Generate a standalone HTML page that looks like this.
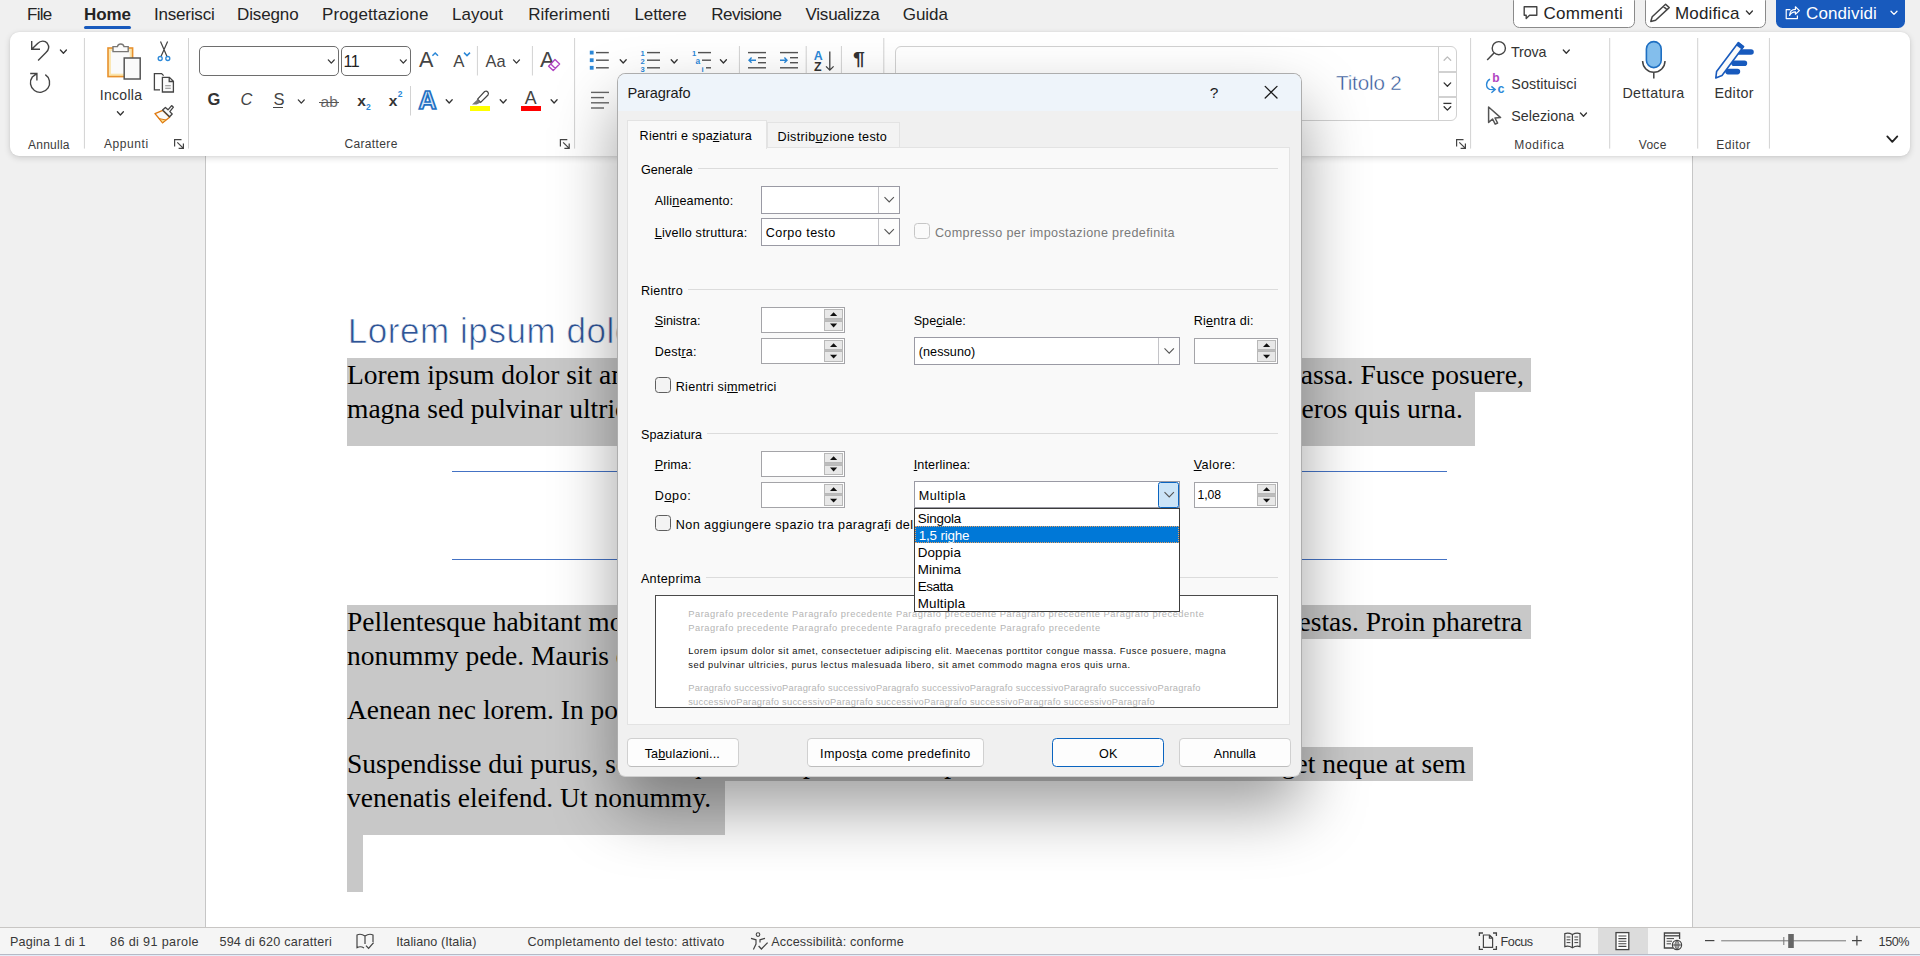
<!DOCTYPE html>
<html lang="it"><head><meta charset="utf-8"><title>Paragrafo</title>
<style>
html,body{margin:0;padding:0}
body{width:1920px;height:956px;overflow:hidden;position:relative;background:#f0f0f0;font-family:"Liberation Sans",sans-serif}
.t{position:absolute;white-space:pre;display:block}
u{text-decoration:underline;text-decoration-thickness:1px;text-underline-offset:0.5px}
#page{position:absolute;left:205px;top:150px;width:1488px;height:790px;background:#fff;border-left:1px solid #c6c6c6;border-right:1px solid #c6c6c6;box-sizing:border-box}
#ribbon{position:absolute;left:10px;top:32px;width:1900px;height:124px;background:#fff;border-radius:9px;box-shadow:0 2px 6px rgba(0,0,0,.15),0 0 2px rgba(0,0,0,.08)}
#ricons{position:absolute;left:0;top:0}
.cb{position:absolute;box-sizing:border-box;border:1px solid #6e6e6e;border-radius:5px;background:#fff}
#status{position:absolute;left:0;top:927px;width:1920px;height:29px;background:linear-gradient(#f5f5f5,#f5f5f5 26px,#b6bac6 26px,#b6bac6 27px,#e2ecf8 27px);border-top:1px solid #c8c6c4;box-sizing:border-box}
#dlg{position:absolute;left:617px;top:73px;width:685px;height:704px;background:#f0f0f0;border-radius:8.5px;border:1px solid #adadad;border-bottom-color:#cfcfcf;box-sizing:border-box;overflow:hidden;box-shadow:0 32px 64px rgba(0,0,0,.38)}
#dlgtitle{position:absolute;left:0;top:0;width:100%;height:37px;background:#eef4fa}
</style></head><body>
<!-- document -->
<div id="page"></div>
<div style="position:absolute;left:347px;top:358px;width:1184.0px;height:34.0px;background:#c8c8c8"></div>
<div style="position:absolute;left:347px;top:392px;width:1128.0px;height:54.0px;background:#c8c8c8"></div>
<div style="position:absolute;left:347px;top:605px;width:1184.0px;height:34.0px;background:#c8c8c8"></div>
<div style="position:absolute;left:347px;top:639px;width:413.0px;height:54.0px;background:#c8c8c8"></div>
<div style="position:absolute;left:347px;top:693px;width:763.0px;height:54.0px;background:#c8c8c8"></div>
<div style="position:absolute;left:347px;top:747px;width:1126.0px;height:34.0px;background:#c8c8c8"></div>
<div style="position:absolute;left:347px;top:781px;width:378.3px;height:53.7px;background:#c8c8c8"></div>
<div style="position:absolute;left:347px;top:834.7px;width:15.8px;height:56.9px;background:#c8c8c8"></div>
<div style="position:absolute;left:452px;top:470.6px;width:995px;height:1.3px;background:#4472c4"></div>
<div style="position:absolute;left:452px;top:558.6px;width:995px;height:1.3px;background:#4472c4"></div>
<span class="t" style="left:347.80px;top:313px;font:35px/1 'Liberation Sans',sans-serif;color:#2f5496;letter-spacing:0.552px;-webkit-text-stroke:0.7px #fff;">Lorem ipsum dolor sit amet</span>
<span class="t" style="left:347.00px;top:361px;font:27.5px/1 'Liberation Serif',serif;color:#000;">Lorem ipsum dolor sit amet, consectetuer adipiscing elit. Maecenas porttitor congue massa. Fusce posuere,</span>
<span class="t" style="left:347.00px;top:395px;font:27.5px/1 'Liberation Serif',serif;color:#000;">magna sed pulvinar ultricies, purus lectus malesuada libero, sit amet commodo magna eros quis urna.</span>
<span class="t" style="left:347.00px;top:608px;font:27.5px/1 'Liberation Serif',serif;color:#000;">Pellentesque habitant morbi tristique senectus et netus et malesuada fames ac turpis egestas. Proin pharetra</span>
<span class="t" style="left:347.00px;top:642px;font:27.5px/1 'Liberation Serif',serif;color:#000;">nonummy pede. Mauris et orci.</span>
<span class="t" style="left:347.00px;top:696px;font:27.5px/1 'Liberation Serif',serif;color:#000;">Aenean nec lorem. In porttitor. Donec laoreet nonummy augue.</span>
<span class="t" style="left:347.00px;top:750px;font:27.5px/1 'Liberation Serif',serif;color:#000;">Suspendisse dui purus, scelerisque at, vulputate vitae, pretium mattis, nunc. Mauris eget neque at sem</span>
<span class="t" style="left:347.00px;top:784px;font:27.5px/1 'Liberation Serif',serif;color:#000;">venenatis eleifend. Ut nonummy.</span>
<!-- ribbon -->
<span class="t" style="left:27.00px;top:6px;font:17px/1 'Liberation Sans',sans-serif;color:#242424;letter-spacing:-0.723px;">File</span>
<span class="t" style="left:84.00px;top:6px;font:bold 17px/1 'Liberation Sans',sans-serif;color:#242424;letter-spacing:-0.058px;">Home</span>
<span class="t" style="left:154.00px;top:6px;font:17px/1 'Liberation Sans',sans-serif;color:#242424;letter-spacing:-0.205px;">Inserisci</span>
<span class="t" style="left:237.00px;top:6px;font:17px/1 'Liberation Sans',sans-serif;color:#242424;letter-spacing:-0.125px;">Disegno</span>
<span class="t" style="left:322.00px;top:6px;font:17px/1 'Liberation Sans',sans-serif;color:#242424;letter-spacing:0.123px;">Progettazione</span>
<span class="t" style="left:452.00px;top:6px;font:17px/1 'Liberation Sans',sans-serif;color:#242424;letter-spacing:-0.007px;">Layout</span>
<span class="t" style="left:528.20px;top:6px;font:17px/1 'Liberation Sans',sans-serif;color:#242424;letter-spacing:0.051px;">Riferimenti</span>
<span class="t" style="left:634.50px;top:6px;font:17px/1 'Liberation Sans',sans-serif;color:#242424;letter-spacing:-0.132px;">Lettere</span>
<span class="t" style="left:711.20px;top:6px;font:17px/1 'Liberation Sans',sans-serif;color:#242424;letter-spacing:-0.483px;">Revisione</span>
<span class="t" style="left:805.50px;top:6px;font:17px/1 'Liberation Sans',sans-serif;color:#242424;letter-spacing:-0.223px;">Visualizza</span>
<span class="t" style="left:902.70px;top:6px;font:17px/1 'Liberation Sans',sans-serif;color:#242424;letter-spacing:-0.013px;">Guida</span>
<div style="position:absolute;left:84px;top:25.5px;width:47px;height:3px;border-radius:1.5px;background:#185abd"></div>
<div style="position:absolute;left:1513px;top:-6px;width:122px;height:33.5px;border:1px solid #8a8a8a;border-radius:6.5px;background:#fff;box-sizing:border-box"></div>
<div style="position:absolute;left:1645px;top:-6px;width:121px;height:33.5px;border:1px solid #8a8a8a;border-radius:6.5px;background:#fff;box-sizing:border-box"></div>
<div style="position:absolute;left:1776px;top:-6px;width:129px;height:34px;border-radius:6.5px;background:#185abd"></div>
<span class="t" style="left:1543.50px;top:5px;font:17px/1 'Liberation Sans',sans-serif;color:#242424;letter-spacing:0.255px;">Commenti</span>
<span class="t" style="left:1675.00px;top:5px;font:17px/1 'Liberation Sans',sans-serif;color:#242424;letter-spacing:0.150px;">Modifica</span>
<span class="t" style="left:1806.00px;top:5px;font:17px/1 'Liberation Sans',sans-serif;color:#ffffff;letter-spacing:0.119px;">Condividi</span>
<div id="ribbon"></div>
<span class="t" style="left:28.00px;top:139px;font:12px/1 'Liberation Sans',sans-serif;color:#3b3b3b;letter-spacing:0.238px;">Annulla</span>
<span class="t" style="left:104.00px;top:138px;font:12px/1 'Liberation Sans',sans-serif;color:#3b3b3b;letter-spacing:0.571px;">Appunti</span>
<span class="t" style="left:344.40px;top:138px;font:12px/1 'Liberation Sans',sans-serif;color:#3b3b3b;letter-spacing:0.364px;">Carattere</span>
<span class="t" style="left:1514.20px;top:139px;font:12px/1 'Liberation Sans',sans-serif;color:#3b3b3b;letter-spacing:0.727px;">Modifica</span>
<span class="t" style="left:1638.80px;top:139px;font:12px/1 'Liberation Sans',sans-serif;color:#3b3b3b;letter-spacing:0.278px;">Voce</span>
<span class="t" style="left:1716.20px;top:139px;font:12px/1 'Liberation Sans',sans-serif;color:#3b3b3b;letter-spacing:0.542px;">Editor</span>
<span class="t" style="left:99.70px;top:88px;font:14px/1 'Liberation Sans',sans-serif;color:#333;letter-spacing:0.319px;">Incolla</span>
<span class="t" style="left:1511.00px;top:45px;font:14.3px/1 'Liberation Sans',sans-serif;color:#333;letter-spacing:-0.145px;">Trova</span>
<span class="t" style="left:1511.30px;top:77px;font:14.3px/1 'Liberation Sans',sans-serif;color:#333;letter-spacing:0.094px;">Sostituisci</span>
<span class="t" style="left:1511.30px;top:109px;font:14.3px/1 'Liberation Sans',sans-serif;color:#333;letter-spacing:0.010px;">Seleziona</span>
<span class="t" style="left:1622.40px;top:86px;font:14.3px/1 'Liberation Sans',sans-serif;color:#333;letter-spacing:0.387px;">Dettatura</span>
<span class="t" style="left:1714.40px;top:86px;font:14.3px/1 'Liberation Sans',sans-serif;color:#333;letter-spacing:0.357px;">Editor</span>
<div class="cb" style="left:199px;top:46px;width:140px;height:30px"></div>
<div class="cb" style="left:341px;top:46px;width:70px;height:30px"></div>
<span class="t" style="left:343.60px;top:54px;font:16px/1 'Liberation Sans',sans-serif;color:#222;letter-spacing:-0.6px;">11</span>
<div style="position:absolute;left:895px;top:46px;width:562px;height:75px;border:1px solid #d1d1d1;border-radius:6px;background:#fff;box-sizing:border-box"></div>
<div style="position:absolute;left:1438px;top:47px;width:1px;height:73px;background:#d1d1d1"></div>
<div style="position:absolute;left:1438px;top:71px;width:18px;height:2px;background:#d1d1d1"></div>
<div style="position:absolute;left:1438px;top:95.5px;width:18px;height:2px;background:#d1d1d1"></div>
<span class="t" style="left:1336.00px;top:73px;font:20.6px/1 'Liberation Sans',sans-serif;color:#2f5496;letter-spacing:-0.149px;-webkit-text-stroke:0.45px #fff;">Titolo 2</span>
<span class="t" style="left:207.60px;top:91px;font:bold 16.5px/1 'Liberation Sans',sans-serif;color:#333;letter-spacing:-0.434px;">G</span>
<span class="t" style="left:240.40px;top:91px;font:italic 16.5px/1 'Liberation Sans',sans-serif;color:#444;letter-spacing:-0.316px;">C</span>
<span class="t" style="left:273.60px;top:91px;font:16.5px/1 'Liberation Sans',sans-serif;color:#444;letter-spacing:-2.005px;">S</span>
<div style="position:absolute;left:273.2px;top:107.2px;width:9.8px;height:1.2px;background:#444"></div>
<span class="t" style="left:320.60px;top:94px;font:15.5px/1 'Liberation Sans',sans-serif;color:#6a6a6a;letter-spacing:-0.020px;">ab</span>
<div style="position:absolute;left:319px;top:102.2px;width:20px;height:1.1px;background:#555"></div>
<span class="t" style="left:357.30px;top:93px;font:bold 15.5px/1 'Liberation Sans',sans-serif;color:#333;letter-spacing:-0.320px;">x</span>
<span class="t" style="left:365.90px;top:103px;font:bold 8.5px/1 'Liberation Sans',sans-serif;color:#2b88d8;">2</span>
<span class="t" style="left:388.80px;top:93px;font:bold 15.5px/1 'Liberation Sans',sans-serif;color:#333;letter-spacing:-0.220px;">x</span>
<span class="t" style="left:397.80px;top:90px;font:bold 8.5px/1 'Liberation Sans',sans-serif;color:#2b88d8;">2</span>
<span class="t" style="left:419.00px;top:49px;font:21.6px/1 'Liberation Sans',sans-serif;color:#444;letter-spacing:-0.207px;">A</span>
<span class="t" style="left:453.20px;top:54px;font:16.8px/1 'Liberation Sans',sans-serif;color:#444;letter-spacing:0.494px;">A</span>
<span class="t" style="left:485.60px;top:53px;font:16.4px/1 'Liberation Sans',sans-serif;color:#444;letter-spacing:-0.030px;">Aa</span>
<span class="t" style="left:540.00px;top:49px;font:22.2px/1 'Liberation Sans',sans-serif;color:#444;letter-spacing:-2.107px;">A</span>
<span class="t" style="left:418.60px;top:88px;font:bold 25px/1 'Liberation Sans',sans-serif;color:#d6e8f8;letter-spacing:1.746px;-webkit-text-stroke:1.7px #1e6fc2;">A</span>
<span class="t" style="left:524.80px;top:90px;font:17.8px/1 'Liberation Sans',sans-serif;color:#444;letter-spacing:0.727px;">A</span>
<div style="position:absolute;left:470px;top:106px;width:20px;height:5px;background:#ffff00"></div>
<div style="position:absolute;left:521px;top:106px;width:20px;height:5px;background:#ff0000"></div>
<span class="t" style="left:813.80px;top:50px;font:bold 12.4px/1 'Liberation Sans',sans-serif;color:#2b88d8;letter-spacing:0.245px;">A</span>
<span class="t" style="left:814.00px;top:61px;font:bold 12.4px/1 'Liberation Sans',sans-serif;color:#333;letter-spacing:1.026px;">Z</span>
<span class="t" style="left:852.60px;top:51px;font:bold 17.5px/1 'Liberation Sans',sans-serif;color:#333;transform:scaleX(1.22);transform-origin:0 0;">¶</span>
<span class="t" style="left:640.60px;top:50px;font:bold 7.6px/1 'Liberation Sans',sans-serif;color:#2b88d8;">1</span>
<span class="t" style="left:640.60px;top:58px;font:bold 7.6px/1 'Liberation Sans',sans-serif;color:#2b88d8;">2</span>
<span class="t" style="left:640.60px;top:66px;font:bold 7.6px/1 'Liberation Sans',sans-serif;color:#2b88d8;">3</span>
<span class="t" style="left:692.00px;top:50px;font:bold 7.6px/1 'Liberation Sans',sans-serif;color:#2b88d8;">1</span>
<span class="t" style="left:695.40px;top:57px;font:bold 8.4px/1 'Liberation Sans',sans-serif;color:#2b88d8;">a</span>
<span class="t" style="left:701.40px;top:66px;font:bold 7.6px/1 'Liberation Sans',sans-serif;color:#2b88d8;">i</span>
<span class="t" style="left:1492.20px;top:72px;font:bold 12px/1 'Liberation Sans',sans-serif;color:#b146c2;">b</span>
<span class="t" style="left:1497.60px;top:83px;font:bold 12.5px/1 'Liberation Sans',sans-serif;color:#2b88d8;">c</span>
<svg id="ricons" width="1920" height="170" viewBox="0 0 1920 170">
<rect x="83.9" y="38" width="1" height="110.6" fill="#d2d2d2"/>
<rect x="188.0" y="38" width="1" height="110.6" fill="#d2d2d2"/>
<rect x="574.1" y="38" width="1" height="110.6" fill="#d2d2d2"/>
<rect x="883.3" y="38" width="1" height="110.6" fill="#d2d2d2"/>
<rect x="1470.1" y="38" width="1" height="110.6" fill="#d2d2d2"/>
<rect x="1609.2" y="38" width="1" height="110.6" fill="#d2d2d2"/>
<rect x="1697.2" y="38" width="1" height="110.6" fill="#d2d2d2"/>
<rect x="1768.9" y="38" width="1" height="110.6" fill="#d2d2d2"/>
<rect x="410.0" y="86" width="1" height="29.5" fill="#d2d2d2"/>
<rect x="476.9" y="46" width="1" height="29.5" fill="#d2d2d2"/>
<rect x="531.9" y="46" width="1" height="29.5" fill="#d2d2d2"/>
<rect x="738.9" y="46" width="1" height="29.5" fill="#d2d2d2"/>
<rect x="805.7" y="46" width="1" height="29.5" fill="#d2d2d2"/>
<rect x="840.9" y="46" width="1" height="29.5" fill="#d2d2d2"/>
<path d="M174.6,146.5 V139.6 H181.5" fill="none" stroke="#444" stroke-width="1.2"/><path d="M177.3,142.3 L183.2,148.2 M183.4,143.6 V148.4 H178.6" fill="none" stroke="#444" stroke-width="1.2"/>
<path d="M560.4,146.5 V139.6 H567.3" fill="none" stroke="#444" stroke-width="1.2"/><path d="M563.0999999999999,142.3 L569.0,148.2 M569.1999999999999,143.6 V148.4 H564.4" fill="none" stroke="#444" stroke-width="1.2"/>
<path d="M1456.6,146.5 V139.6 H1463.5" fill="none" stroke="#444" stroke-width="1.2"/><path d="M1459.3,142.3 L1465.2,148.2 M1465.4,143.6 V148.4 H1460.6" fill="none" stroke="#444" stroke-width="1.2"/>
<path d="M60.40,50.00 L63.40,53.20 L66.40,50.00" fill="none" stroke="#333" stroke-width="1.3" stroke-linecap="round" stroke-linejoin="round"/>
<path d="M117.40,111.80 L120.40,115.00 L123.40,111.80" fill="none" stroke="#333" stroke-width="1.3" stroke-linecap="round" stroke-linejoin="round"/>
<path d="M328.30,59.90 L331.30,63.10 L334.30,59.90" fill="none" stroke="#333" stroke-width="1.3" stroke-linecap="round" stroke-linejoin="round"/>
<path d="M400.30,59.90 L403.30,63.10 L406.30,59.90" fill="none" stroke="#333" stroke-width="1.3" stroke-linecap="round" stroke-linejoin="round"/>
<path d="M298.30,99.90 L301.30,103.10 L304.30,99.90" fill="none" stroke="#333" stroke-width="1.3" stroke-linecap="round" stroke-linejoin="round"/>
<path d="M513.50,59.90 L516.50,63.10 L519.50,59.90" fill="none" stroke="#333" stroke-width="1.3" stroke-linecap="round" stroke-linejoin="round"/>
<path d="M446.20,99.80 L449.20,103.00 L452.20,99.80" fill="none" stroke="#333" stroke-width="1.3" stroke-linecap="round" stroke-linejoin="round"/>
<path d="M500.20,99.80 L503.20,103.00 L506.20,99.80" fill="none" stroke="#333" stroke-width="1.3" stroke-linecap="round" stroke-linejoin="round"/>
<path d="M551.10,99.80 L554.10,103.00 L557.10,99.80" fill="none" stroke="#333" stroke-width="1.3" stroke-linecap="round" stroke-linejoin="round"/>
<path d="M620.20,59.80 L623.20,63.00 L626.20,59.80" fill="none" stroke="#333" stroke-width="1.3" stroke-linecap="round" stroke-linejoin="round"/>
<path d="M671.20,59.80 L674.20,63.00 L677.20,59.80" fill="none" stroke="#333" stroke-width="1.3" stroke-linecap="round" stroke-linejoin="round"/>
<path d="M720.40,59.80 L723.40,63.00 L726.40,59.80" fill="none" stroke="#333" stroke-width="1.3" stroke-linecap="round" stroke-linejoin="round"/>
<path d="M1563.30,50.00 L1566.30,53.20 L1569.30,50.00" fill="none" stroke="#333" stroke-width="1.3" stroke-linecap="round" stroke-linejoin="round"/>
<path d="M1580.50,113.00 L1583.50,116.20 L1586.50,113.00" fill="none" stroke="#333" stroke-width="1.3" stroke-linecap="round" stroke-linejoin="round"/>
<path d="M1746.40,11.00 L1749.40,14.20 L1752.40,11.00" fill="none" stroke="#333" stroke-width="1.3" stroke-linecap="round" stroke-linejoin="round"/>
<path d="M1891.00,11.20 L1894.00,14.40 L1897.00,11.20" fill="none" stroke="#fff" stroke-width="1.3" stroke-linecap="round" stroke-linejoin="round"/>
<path d="M1887.30,136.40 L1892.30,141.80 L1897.30,136.40" fill="none" stroke="#222" stroke-width="1.8" stroke-linecap="round" stroke-linejoin="round"/>
<path d="M1444.10,60.30 L1447.40,56.90 L1450.70,60.30" fill="none" stroke="#bdbdbd" stroke-width="1.3" stroke-linecap="round" stroke-linejoin="round"/>
<path d="M1444.10,82.90 L1447.40,86.30 L1450.70,82.90" fill="none" stroke="#333" stroke-width="1.3" stroke-linecap="round" stroke-linejoin="round"/>
<path d="M1444.10,106.70 L1447.40,110.10 L1450.70,106.70" fill="none" stroke="#333" stroke-width="1.3" stroke-linecap="round" stroke-linejoin="round"/>
<path d="M1443.4,103.4 H1451.4" stroke="#333" stroke-width="1.3"/>
<path d="M31.7,41 V49.2 H40 M32.2,48.8 L37.6,43.4 C40.6,40.4 45,40.3 47.3,43.3 C49.4,46.2 48.7,49.8 46,52.5 L38.1,60.4" fill="none" stroke="#444" stroke-width="1.4"/>
<path d="M45.3,74.7 A9.6,9.6 0 1 1 32.3,77 L36.8,73.6 M30.2,73.5 H36.9 V80.4" fill="none" stroke="#444" stroke-width="1.4"/>
<rect x="108" y="48" width="24.6" height="28.6" fill="#fbe5ac" stroke="#e8912d" stroke-width="1.6"/>
<rect x="110.9" y="50.9" width="18.8" height="22.8" fill="#fafafa"/>
<path d="M113,51.6 V46.6 H117.4 A3.4,3.4 0 0 1 124,46.6 H128.2 V51.6 Z" fill="#fafafa" stroke="#797775" stroke-width="1.4"/>
<rect x="124.2" y="58" width="16" height="21" fill="#fafafa" stroke="#555" stroke-width="1.5"/>
<path d="M160.5,41.5 L167,56.6 M167.6,41.5 L161,56.6" fill="none" stroke="#444" stroke-width="1.2"/>
<circle cx="160.2" cy="58.5" r="2" fill="#fff" stroke="#2b88d8" stroke-width="1.3"/><circle cx="167.8" cy="58.5" r="2" fill="#fff" stroke="#2b88d8" stroke-width="1.3"/>
<path d="M160,89.8 H154.4 V73.6 H161.6 L163.6,75.6" fill="none" stroke="#444" stroke-width="1.3"/>
<path d="M162.4,77.3 H169.4 L173.4,81.3 V92 H162.4 Z M169.2,77.5 V81.5 H173.2" fill="#fafafa" stroke="#444" stroke-width="1.3"/>
<path d="M165.2,85.8 H170.8 M165.2,88.2 H170.8" stroke="#888" stroke-width="1.1"/>
<path d="M155,113.6 L162.8,110.4 L169.6,117.2 L162.6,122.8 Z" fill="#fafafa" stroke="#e07a10" stroke-width="1.4" stroke-linejoin="round"/>
<path d="M159.2,118.6 L166,120 L162.6,122.6 Z" fill="#fbe08c" stroke="#e07a10" stroke-width="1"/>
<path d="M162.6,110 L165.4,107.4 L168,109.8 L171.6,105.6 L173.4,107.2 L169.8,111.6 L172.2,114 L169.6,116.8 Z" fill="#fafafa" stroke="#444" stroke-width="1.3" stroke-linejoin="round"/>
<path d="M432.4,55.8 L435.2,53 L438,55.8" fill="none" stroke="#2b88d8" stroke-width="1.5"/>
<path d="M464,52.6 L467,55.6 L470,52.6" fill="none" stroke="#2b88d8" stroke-width="1.5"/>
<path d="M548.6,66.2 L555,59.6 L559.6,64 L553.2,70.6 Z M550.8,64 L555.4,68.4" fill="#fff" stroke="#b146c2" stroke-width="1.4" stroke-linejoin="round"/>
<path d="M477.6,99.2 L484.6,91.6 Q486.4,90.6 487.8,92 Q489,93.4 488,95 L480.6,102.4 Z" fill="#fff" stroke="#444" stroke-width="1.2"/>
<path d="M477.4,99.4 L480.6,102.6 L476.6,104.6 L472,104.6 Z" fill="#777"/>
<rect x="589.8" y="50.7" width="3.8" height="3.8" fill="#2b88d8"/><rect x="596" y="51.9" width="12.8" height="1.4" fill="#555"/>
<rect x="647" y="51.9" width="13" height="1.4" fill="#555"/>
<rect x="589.8" y="58.300000000000004" width="3.8" height="3.8" fill="#2b88d8"/><rect x="596" y="59.5" width="12.8" height="1.4" fill="#555"/>
<rect x="647" y="59.5" width="13" height="1.4" fill="#555"/>
<rect x="589.8" y="65.89999999999999" width="3.8" height="3.8" fill="#2b88d8"/><rect x="596" y="67.1" width="12.8" height="1.4" fill="#555"/>
<rect x="647" y="67.1" width="13" height="1.4" fill="#555"/>
<rect x="698" y="51.9" width="13" height="1.4" fill="#555"/><rect x="702" y="59.5" width="9" height="1.4" fill="#555"/><rect x="706" y="67.1" width="5" height="1.4" fill="#555"/>
<rect x="748" y="51.9" width="18" height="1.4" fill="#555"/><rect x="748" y="67.1" width="18" height="1.4" fill="#555"/>
<rect x="758" y="57" width="8" height="1.4" fill="#555"/><rect x="758" y="62" width="8" height="1.4" fill="#555"/>
<path d="M756,60.2 H749 M751.6,57.6 L749,60.2 L751.6,62.8" fill="none" stroke="#2b88d8" stroke-width="1.4"/>
<rect x="780" y="51.9" width="18" height="1.4" fill="#555"/><rect x="780" y="67.1" width="18" height="1.4" fill="#555"/>
<rect x="790" y="57" width="8" height="1.4" fill="#555"/><rect x="790" y="62" width="8" height="1.4" fill="#555"/>
<path d="M780,60.2 H787 M784.4,57.6 L787,60.2 L784.4,62.8" fill="none" stroke="#2b88d8" stroke-width="1.4"/>
<path d="M829.8,51.6 V70 M826,66.4 L829.8,70.2 L833.6,66.4" fill="none" stroke="#444" stroke-width="1.3"/>
<rect x="591" y="91.7" width="18" height="1.4" fill="#666"/>
<rect x="591" y="96.89999999999999" width="13" height="1.4" fill="#666"/>
<rect x="591" y="102.1" width="18" height="1.4" fill="#666"/>
<rect x="591" y="107.3" width="13" height="1.4" fill="#666"/>
<circle cx="1498.8" cy="48.2" r="6.6" fill="none" stroke="#444" stroke-width="1.4"/><path d="M1494,53 L1487.2,60" stroke="#444" stroke-width="1.5"/>
<path d="M1490,79.2 C1485.6,81.6 1485.4,87.6 1489.6,89.4 L1495,89.6 M1491.4,86.4 L1495.2,89.6 L1491.4,92.8" fill="none" stroke="#2b88d8" stroke-width="1.4"/>
<path d="M1488.6,107 V122.4 L1492.6,119 L1495.2,124.2 L1497.6,123 L1495,118 L1500.6,117.6 Z" fill="#fff" stroke="#555" stroke-width="1.5" stroke-linejoin="round"/>
<rect x="1646.4" y="41.6" width="14.8" height="26" rx="7.4" fill="#83beec" stroke="#1e6fc2" stroke-width="1.6"/>
<path d="M1642.6,61 A11.2,11.2 0 0 0 1665,61 M1653.8,72.4 V78.6" fill="none" stroke="#444" stroke-width="1.5"/>
<path d="M1739,52 H1751 M1734,63.2 H1744.4 M1728,71.6 H1737.4" stroke="#185abd" stroke-width="5.6" stroke-linecap="round"/>
<path d="M1738.4,42.6 L1743.6,46.6 L1722,75.6 L1715.8,78 L1716.6,71.4 Z" fill="#fafafa" stroke="#185abd" stroke-width="1.6" stroke-linejoin="round"/>
<path d="M1738.4,42 L1744.2,46.4 L1741.8,49.6 L1736,45.2 Z" fill="#185abd"/>
<path d="M1524.2,6.8 H1536.8 V15.2 H1529.6 L1526.2,18.4 V15.2 H1524.2 Z" fill="none" stroke="#444" stroke-width="1.4" stroke-linejoin="round"/>
<path d="M1665.6,4.2 L1669.2,7.6 L1655.6,20.2 L1650.8,21.4 L1652.2,16.8 Z M1663.4,6.4 L1667,9.8" fill="none" stroke="#444" stroke-width="1.5" stroke-linejoin="round"/>
<path d="M1790.4,9.6 H1786.2 V18.6 H1797.4 V15.6 M1789.6,15.4 C1789.8,11.4 1792.4,9.4 1795.4,9.4 V6.8 L1799.4,10.6 L1795.4,14.2 V11.8 C1793,11.8 1791,12.8 1789.6,15.4 Z" fill="none" stroke="#fff" stroke-width="1.2" stroke-linejoin="round"/>
</svg>
<!-- status -->
<div id="status"></div>
<span class="t" style="left:10.00px;top:936px;font:12.6px/1 'Liberation Sans',sans-serif;color:#383838;letter-spacing:0.165px;">Pagina 1 di 1</span>
<span class="t" style="left:110.00px;top:936px;font:12.6px/1 'Liberation Sans',sans-serif;color:#383838;letter-spacing:0.376px;">86 di 91 parole</span>
<span class="t" style="left:219.40px;top:936px;font:12.6px/1 'Liberation Sans',sans-serif;color:#383838;letter-spacing:0.237px;">594 di 620 caratteri</span>
<span class="t" style="left:396.20px;top:936px;font:12.6px/1 'Liberation Sans',sans-serif;color:#383838;letter-spacing:0.068px;">Italiano (Italia)</span>
<span class="t" style="left:527.40px;top:936px;font:12.6px/1 'Liberation Sans',sans-serif;color:#383838;letter-spacing:0.291px;">Completamento del testo: attivato</span>
<span class="t" style="left:771.20px;top:936px;font:12.6px/1 'Liberation Sans',sans-serif;color:#383838;letter-spacing:0.172px;">Accessibilità: conforme</span>
<span class="t" style="left:1500.60px;top:936px;font:12.6px/1 'Liberation Sans',sans-serif;color:#383838;letter-spacing:-0.442px;">Focus</span>
<span class="t" style="left:1878.60px;top:936px;font:12.6px/1 'Liberation Sans',sans-serif;color:#383838;letter-spacing:-0.457px;">150%</span>
<div style="position:absolute;left:1598px;top:928px;width:50px;height:26px;background:#dcdcdc"></div>
<svg id="sicons" width="1920" height="40" viewBox="0 916 1920 40" style="position:absolute;left:0;top:916px">
<path d="M365,936 C362,934 359,934 357,935 V947.6 C359,946.6 362,946.6 364,948 M365,936 C368,934 371,934 373,935 V942 M365,936 V944" fill="none" stroke="#444" stroke-width="1.2"/>
<path d="M366,945.6 L368.6,948.4 L373.6,942.6" fill="none" stroke="#444" stroke-width="1.3"/>
<circle cx="758" cy="934.6" r="1.8" fill="none" stroke="#444" stroke-width="1.1"/><path d="M751,938.4 L756,939.8 V944 L753.4,949.4 M765,938.4 L760,939.8 V942.4" fill="none" stroke="#444" stroke-width="1.2"/>
<path d="M758.6,946 L761.4,949 L767.6,942.6" fill="none" stroke="#444" stroke-width="1.3"/>
<path d="M1479.4,936 V933 H1483 M1493,933 H1496.4 V936 M1496.4,946 V949.4 H1493 M1483,949.4 H1479.4 V946" fill="none" stroke="#444" stroke-width="1.3"/>
<path d="M1483.4,935 H1489.6 L1492.6,938 V947.4 H1483.4 Z M1489.4,935.2 V938.2 H1492.4" fill="none" stroke="#444" stroke-width="1.2"/>
<path d="M1572.4,934.6 C1569.6,933 1566.8,933 1564.8,933.6 V946.6 C1566.8,946 1569.6,946 1572.4,947.8 C1575.2,946 1578,946 1580,946.6 V933.6 C1578,933 1575.2,933 1572.4,934.6 Z M1572.4,934.6 V947.6" fill="none" stroke="#444" stroke-width="1.2"/>
<path d="M1566.6,937 H1570.4 M1566.6,939.8 H1570.4 M1566.6,942.6 H1570.4 M1574.4,937 H1578.2 M1574.4,939.8 H1578.2 M1574.4,942.6 H1578.2" stroke="#444" stroke-width="1"/>
<rect x="1616" y="932.6" width="12.8" height="17" fill="#fff" stroke="#444" stroke-width="1.3"/>
<path d="M1618.4,936 H1626.4 M1618.4,938.6 H1626.4 M1618.4,941.2 H1626.4 M1618.4,943.8 H1626.4 M1618.4,946.4 H1626.4" stroke="#444" stroke-width="1.1"/>
<path d="M1673,948 H1664.4 V933 H1679.6 V939" fill="none" stroke="#444" stroke-width="1.3"/><path d="M1664.4,935.8 H1679.6" stroke="#444" stroke-width="1.3"/>
<path d="M1666.6,938.6 H1674 M1666.6,941.2 H1672 M1666.6,943.8 H1671" stroke="#444" stroke-width="1"/>
<circle cx="1677" cy="945" r="4.6" fill="#f5f5f5" stroke="#444" stroke-width="1.2"/><path d="M1672.4,945 H1681.6 M1677,940.4 V949.6 M1677,940.4 C1674.4,943 1674.4,947 1677,949.6 M1677,940.4 C1679.6,943 1679.6,947 1677,949.6" fill="none" stroke="#444" stroke-width="0.9"/>
<path d="M1705,940.6 H1714.4" stroke="#444" stroke-width="1.2"/>
<path d="M1721.2,940.8 H1846" stroke="#777" stroke-width="1"/><path d="M1783.8,937 V945" stroke="#777" stroke-width="1"/>
<rect x="1788.2" y="934" width="5.6" height="14" fill="#666"/>
<path d="M1852,940.6 H1861.8 M1856.9,935.8 V945.4" stroke="#444" stroke-width="1.2"/>
</svg>
<!-- dialog -->
<div id="dlg"><div id="dlgtitle"></div></div>
<span class="t" style="left:627.40px;top:86px;font:14.6px/1 'Liberation Sans',sans-serif;color:#1a1a1a;letter-spacing:-0.102px;">Paragrafo</span>
<span class="t" style="left:1209.80px;top:85px;font:15.5px/1 'Liberation Sans',sans-serif;color:#1a1a1a;letter-spacing:-1.620px;">?</span>
<svg style="position:absolute;left:1260px;top:82px" width="22" height="22" viewBox="1260 82 22 22"><path d="M1265.2,86.4 L1277,98 M1277,86.4 L1265.2,98" stroke="#1a1a1a" stroke-width="1.3" stroke-linecap="round"/></svg>
<div style="position:absolute;left:627.0px;top:147.0px;width:663.0px;height:578.4px;box-sizing:border-box;background:#f9f9f9;border:1px solid #e3e3e3"></div>
<div style="position:absolute;left:767.0px;top:122.4px;width:133.0px;height:25.6px;box-sizing:border-box;background:#f3f3f3;border:1px solid #e3e3e3"></div>
<div style="position:absolute;left:627.0px;top:120.2px;width:140.4px;height:28.8px;box-sizing:border-box;background:#f9f9f9;border:1px solid #e3e3e3;border-bottom:none"></div>
<span class="t" style="left:639.60px;top:130px;font:12.6px/1 'Liberation Sans',sans-serif;color:#000;letter-spacing:0.197px;">Rientri e spa<u>z</u>iatura</span>
<span class="t" style="left:777.60px;top:131px;font:12.6px/1 'Liberation Sans',sans-serif;color:#000;letter-spacing:0.313px;">Distrib<u>u</u>zione testo</span>
<span class="t" style="left:640.90px;top:164px;font:12.6px/1 'Liberation Sans',sans-serif;color:#000;letter-spacing:0.021px;">Generale</span>
<div style="position:absolute;left:698.0px;top:168.1px;width:580.0px;height:1px;background:#dcdcdc"></div>
<span class="t" style="left:654.70px;top:195px;font:12.6px/1 'Liberation Sans',sans-serif;color:#000;letter-spacing:0.181px;">Alli<u>n</u>eamento:</span>
<span class="t" style="left:654.70px;top:227px;font:12.6px/1 'Liberation Sans',sans-serif;color:#000;letter-spacing:0.215px;"><u>L</u>ivello struttura:</span>
<div style="position:absolute;left:761.0px;top:186.2px;width:139.0px;height:27.4px;box-sizing:border-box;background:#fff;border:1px solid #9a9aa4"></div>
<div style="position:absolute;left:878.0px;top:187.2px;width:1.0px;height:25.4px;box-sizing:border-box;background:#c4c4c8"></div>
<div style="position:absolute;left:879.0px;top:187.2px;width:20.0px;height:25.4px;box-sizing:border-box;background:#fdfdfd"></div>
<svg style="position:absolute;left:878.0px;top:186.2px" width="22" height="27.4" viewBox="878.0 186.2 22 27.4"><path d="M884.50,197.40 L889.20,202.10 L893.90,197.40" fill="none" stroke="#555" stroke-width="1.1"/></svg>
<div style="position:absolute;left:761.0px;top:218.2px;width:139.0px;height:27.4px;box-sizing:border-box;background:#fff;border:1px solid #9a9aa4"></div>
<div style="position:absolute;left:878.0px;top:219.2px;width:1.0px;height:25.4px;box-sizing:border-box;background:#c4c4c8"></div>
<div style="position:absolute;left:879.0px;top:219.2px;width:20.0px;height:25.4px;box-sizing:border-box;background:#fdfdfd"></div>
<svg style="position:absolute;left:878.0px;top:218.2px" width="22" height="27.4" viewBox="878.0 218.2 22 27.4"><path d="M884.50,229.40 L889.20,234.10 L893.90,229.40" fill="none" stroke="#555" stroke-width="1.1"/></svg>
<span class="t" style="left:765.70px;top:227px;font:12.6px/1 'Liberation Sans',sans-serif;color:#000;letter-spacing:0.451px;">Corpo testo</span>
<div style="position:absolute;left:914.2px;top:223.2px;width:15.8px;height:15.6px;box-sizing:border-box;background:#fafafa;border:1.1px solid #c6c6c6;border-radius:3.5px"></div>
<span class="t" style="left:934.90px;top:227px;font:12.6px/1 'Liberation Sans',sans-serif;color:#7a7a7a;letter-spacing:0.368px;">Compresso per impostazione predefinita</span>
<span class="t" style="left:640.90px;top:285px;font:12.6px/1 'Liberation Sans',sans-serif;color:#000;letter-spacing:0.212px;">Rientro</span>
<div style="position:absolute;left:688.0px;top:288.8px;width:590.0px;height:1px;background:#dcdcdc"></div>
<span class="t" style="left:654.70px;top:315px;font:12.6px/1 'Liberation Sans',sans-serif;color:#000;letter-spacing:0.032px;"><u>S</u>inistra:</span>
<span class="t" style="left:654.70px;top:346px;font:12.6px/1 'Liberation Sans',sans-serif;color:#000;letter-spacing:0.198px;">Dest<u>r</u>a:</span>
<div style="position:absolute;left:761.0px;top:307.3px;width:84.0px;height:25.5px;box-sizing:border-box;background:#fff;border:1px solid #a4a4a8"></div>
<div style="position:absolute;left:823.8px;top:309.3px;width:19.2px;height:21.5px;box-sizing:border-box;background:#bcbcbc"></div>
<div style="position:absolute;left:823.8px;top:309.3px;width:19.2px;height:10.2px;box-sizing:border-box;background:#e8e8e8;border:1px solid #b8b8b8"></div>
<div style="position:absolute;left:823.8px;top:320.6px;width:19.2px;height:10.2px;box-sizing:border-box;background:#e8e8e8;border:1px solid #b8b8b8"></div>
<svg style="position:absolute;left:823.8px;top:307.3px" width="20" height="25.5" viewBox="823.8 307.3 20 25.5"><path d="M829.8,316.22499999999997 L833.4,312.425 L837.0,316.22499999999997 Z M829.8,323.875 L833.4,327.67499999999995 L837.0,323.875 Z" fill="#111"/></svg>
<div style="position:absolute;left:761.0px;top:338.1px;width:84.0px;height:25.6px;box-sizing:border-box;background:#fff;border:1px solid #a4a4a8"></div>
<div style="position:absolute;left:823.8px;top:340.1px;width:19.2px;height:21.6px;box-sizing:border-box;background:#bcbcbc"></div>
<div style="position:absolute;left:823.8px;top:340.1px;width:19.2px;height:10.3px;box-sizing:border-box;background:#e8e8e8;border:1px solid #b8b8b8"></div>
<div style="position:absolute;left:823.8px;top:351.4px;width:19.2px;height:10.3px;box-sizing:border-box;background:#e8e8e8;border:1px solid #b8b8b8"></div>
<svg style="position:absolute;left:823.8px;top:338.1px" width="20" height="25.6" viewBox="823.8 338.1 20 25.6"><path d="M829.8,347.04999999999995 L833.4,343.25 L837.0,347.04999999999995 Z M829.8,354.75 L833.4,358.54999999999995 L837.0,354.75 Z" fill="#111"/></svg>
<span class="t" style="left:913.70px;top:315px;font:12.6px/1 'Liberation Sans',sans-serif;color:#000;letter-spacing:0.018px;">Spe<u>c</u>iale:</span>
<span class="t" style="left:1193.70px;top:315px;font:12.6px/1 'Liberation Sans',sans-serif;color:#000;letter-spacing:0.243px;">Ri<u>e</u>ntra di:</span>
<div style="position:absolute;left:914.2px;top:337.0px;width:265.8px;height:27.8px;box-sizing:border-box;background:#fff;border:1px solid #9a9aa4"></div>
<div style="position:absolute;left:1158.0px;top:338.0px;width:1.0px;height:25.8px;box-sizing:border-box;background:#c4c4c8"></div>
<div style="position:absolute;left:1159.0px;top:338.0px;width:20.0px;height:25.8px;box-sizing:border-box;background:#fdfdfd"></div>
<svg style="position:absolute;left:1158.0px;top:337.0px" width="22" height="27.8" viewBox="1158.0 337.0 22 27.8"><path d="M1164.50,348.40 L1169.20,353.10 L1173.90,348.40" fill="none" stroke="#555" stroke-width="1.1"/></svg>
<span class="t" style="left:918.80px;top:346px;font:12.6px/1 'Liberation Sans',sans-serif;color:#000;letter-spacing:0.052px;">(nessuno)</span>
<div style="position:absolute;left:1194.2px;top:338.1px;width:83.7px;height:25.6px;box-sizing:border-box;background:#fff;border:1px solid #a4a4a8"></div>
<div style="position:absolute;left:1256.7px;top:340.1px;width:19.2px;height:21.6px;box-sizing:border-box;background:#bcbcbc"></div>
<div style="position:absolute;left:1256.7px;top:340.1px;width:19.2px;height:10.3px;box-sizing:border-box;background:#e8e8e8;border:1px solid #b8b8b8"></div>
<div style="position:absolute;left:1256.7px;top:351.4px;width:19.2px;height:10.3px;box-sizing:border-box;background:#e8e8e8;border:1px solid #b8b8b8"></div>
<svg style="position:absolute;left:1256.7px;top:338.1px" width="20" height="25.6" viewBox="1256.7 338.1 20 25.6"><path d="M1262.7000000000003,347.04999999999995 L1266.3000000000002,343.25 L1269.9,347.04999999999995 Z M1262.7000000000003,354.75 L1266.3000000000002,358.54999999999995 L1269.9,354.75 Z" fill="#111"/></svg>
<div style="position:absolute;left:655.2px;top:377.2px;width:15.7px;height:15.6px;box-sizing:border-box;background:#f3f3f3;border:1.1px solid #5f5f5f;border-radius:3.5px"></div>
<span class="t" style="left:675.80px;top:381px;font:12.6px/1 'Liberation Sans',sans-serif;color:#000;letter-spacing:0.228px;">Rientri si<u>m</u>metrici</span>
<span class="t" style="left:640.90px;top:429px;font:12.6px/1 'Liberation Sans',sans-serif;color:#000;letter-spacing:0.106px;">Spaziatura</span>
<div style="position:absolute;left:707.3px;top:432.8px;width:570.7px;height:1px;background:#dcdcdc"></div>
<span class="t" style="left:654.70px;top:459px;font:12.6px/1 'Liberation Sans',sans-serif;color:#000;letter-spacing:0.066px;"><u>P</u>rima:</span>
<span class="t" style="left:654.70px;top:490px;font:12.6px/1 'Liberation Sans',sans-serif;color:#000;letter-spacing:0.635px;">D<u>o</u>po:</span>
<div style="position:absolute;left:761.0px;top:451.3px;width:84.0px;height:25.5px;box-sizing:border-box;background:#fff;border:1px solid #a4a4a8"></div>
<div style="position:absolute;left:823.8px;top:453.3px;width:19.2px;height:21.5px;box-sizing:border-box;background:#bcbcbc"></div>
<div style="position:absolute;left:823.8px;top:453.3px;width:19.2px;height:10.2px;box-sizing:border-box;background:#e8e8e8;border:1px solid #b8b8b8"></div>
<div style="position:absolute;left:823.8px;top:464.6px;width:19.2px;height:10.2px;box-sizing:border-box;background:#e8e8e8;border:1px solid #b8b8b8"></div>
<svg style="position:absolute;left:823.8px;top:451.3px" width="20" height="25.5" viewBox="823.8 451.3 20 25.5"><path d="M829.8,460.22499999999997 L833.4,456.425 L837.0,460.22499999999997 Z M829.8,467.875 L833.4,471.67499999999995 L837.0,467.875 Z" fill="#111"/></svg>
<div style="position:absolute;left:761.0px;top:482.1px;width:84.0px;height:25.6px;box-sizing:border-box;background:#fff;border:1px solid #a4a4a8"></div>
<div style="position:absolute;left:823.8px;top:484.1px;width:19.2px;height:21.6px;box-sizing:border-box;background:#bcbcbc"></div>
<div style="position:absolute;left:823.8px;top:484.1px;width:19.2px;height:10.3px;box-sizing:border-box;background:#e8e8e8;border:1px solid #b8b8b8"></div>
<div style="position:absolute;left:823.8px;top:495.4px;width:19.2px;height:10.3px;box-sizing:border-box;background:#e8e8e8;border:1px solid #b8b8b8"></div>
<svg style="position:absolute;left:823.8px;top:482.1px" width="20" height="25.6" viewBox="823.8 482.1 20 25.6"><path d="M829.8,491.04999999999995 L833.4,487.25 L837.0,491.04999999999995 Z M829.8,498.75 L833.4,502.54999999999995 L837.0,498.75 Z" fill="#111"/></svg>
<span class="t" style="left:913.70px;top:459px;font:12.6px/1 'Liberation Sans',sans-serif;color:#000;letter-spacing:0.133px;"><u>I</u>nterlinea:</span>
<span class="t" style="left:1193.70px;top:459px;font:12.6px/1 'Liberation Sans',sans-serif;color:#000;letter-spacing:0.430px;"><u>V</u>alore:</span>
<div style="position:absolute;left:914.2px;top:481.1px;width:265.8px;height:27.3px;box-sizing:border-box;background:#fff;border:1px solid #9a9aa4"></div>
<div style="position:absolute;left:1158.0px;top:481.9px;width:21.2px;height:26.1px;box-sizing:border-box;background:#cce4f7;border:1.6px solid #0a64c0;border-radius:2.5px"></div>
<svg style="position:absolute;left:1158.0px;top:481.1px" width="22" height="27.3" viewBox="1158.0 481.1 22 27.3"><path d="M1164.50,492.25 L1169.20,496.95 L1173.90,492.25" fill="none" stroke="#555" stroke-width="1.1"/></svg>
<span class="t" style="left:918.80px;top:490px;font:12.6px/1 'Liberation Sans',sans-serif;color:#000;letter-spacing:0.485px;">Multipla</span>
<div style="position:absolute;left:1194.2px;top:482.1px;width:83.7px;height:25.8px;box-sizing:border-box;background:#fff;border:1px solid #a4a4a8"></div>
<div style="position:absolute;left:1256.7px;top:484.1px;width:19.2px;height:21.8px;box-sizing:border-box;background:#bcbcbc"></div>
<div style="position:absolute;left:1256.7px;top:484.1px;width:19.2px;height:10.4px;box-sizing:border-box;background:#e8e8e8;border:1px solid #b8b8b8"></div>
<div style="position:absolute;left:1256.7px;top:495.5px;width:19.2px;height:10.4px;box-sizing:border-box;background:#e8e8e8;border:1px solid #b8b8b8"></div>
<svg style="position:absolute;left:1256.7px;top:482.1px" width="20" height="25.8" viewBox="1256.7 482.1 20 25.8"><path d="M1262.7000000000003,491.09999999999997 L1266.3000000000002,487.3 L1269.9,491.09999999999997 Z M1262.7000000000003,498.9 L1266.3000000000002,502.69999999999993 L1269.9,498.9 Z" fill="#111"/></svg>
<span class="t" style="left:1197.50px;top:489px;font:12.2px/1 'Liberation Sans',sans-serif;color:#000;letter-spacing:-0.036px;">1,08</span>
<div style="position:absolute;left:655.2px;top:515.2px;width:15.7px;height:15.6px;box-sizing:border-box;background:#f3f3f3;border:1.1px solid #5f5f5f;border-radius:3.5px"></div>
<span class="t" style="left:675.80px;top:519px;font:12.6px/1 'Liberation Sans',sans-serif;color:#000;letter-spacing:0.422px;">Non aggiungere spazio tra paragra<u>f</u>i dello stesso stile</span>
<span class="t" style="left:640.90px;top:573px;font:12.6px/1 'Liberation Sans',sans-serif;color:#000;letter-spacing:0.319px;">Anteprima</span>
<div style="position:absolute;left:706.4px;top:576.9px;width:571.6px;height:1px;background:#dcdcdc"></div>
<div style="position:absolute;left:655.0px;top:595.2px;width:623.0px;height:112.4px;box-sizing:border-box;background:#fff;border:1px solid #4a4a4a"></div>
<div style="position:absolute;left:656px;top:596.2px;width:621px;height:110.4px;overflow:hidden">
<span class="t" style="left:32.20px;top:14px;font:9.3px/1 'Liberation Sans',sans-serif;color:#b4b4b4;letter-spacing:0.540px;">Paragrafo precedente Paragrafo precedente Paragrafo precedente Paragrafo precedente Paragrafo precedente</span>
<span class="t" style="left:32.20px;top:28px;font:9.3px/1 'Liberation Sans',sans-serif;color:#b4b4b4;letter-spacing:0.542px;">Paragrafo precedente Paragrafo precedente Paragrafo precedente Paragrafo precedente</span>
<span class="t" style="left:32.20px;top:51px;font:9.3px/1 'Liberation Sans',sans-serif;color:#111;letter-spacing:0.574px;">Lorem ipsum dolor sit amet, consectetuer adipiscing elit. Maecenas porttitor congue massa. Fusce posuere, magna</span>
<span class="t" style="left:32.20px;top:65px;font:9.3px/1 'Liberation Sans',sans-serif;color:#111;letter-spacing:0.575px;">sed pulvinar ultricies, purus lectus malesuada libero, sit amet commodo magna eros quis urna.</span>
<span class="t" style="left:32.20px;top:88px;font:9.3px/1 'Liberation Sans',sans-serif;color:#b4b4b4;letter-spacing:0.250px;">Paragrafo successivoParagrafo successivoParagrafo successivoParagrafo successivoParagrafo successivoParagrafo</span>
<span class="t" style="left:32.20px;top:102px;font:9.3px/1 'Liberation Sans',sans-serif;color:#b4b4b4;letter-spacing:0.252px;">successivoParagrafo successivoParagrafo successivoParagrafo successivoParagrafo successivoParagrafo</span>
</div>
<div style="position:absolute;left:627.0px;top:738.2px;width:111.6px;height:28.7px;box-sizing:border-box;background:#fdfdfd;border:1px solid #d0d0d0;border-bottom-color:#bdbdbd;border-radius:4.5px"></div>
<div style="position:absolute;left:807.3px;top:738.2px;width:176.4px;height:28.7px;box-sizing:border-box;background:#fdfdfd;border:1px solid #d0d0d0;border-bottom-color:#bdbdbd;border-radius:4.5px"></div>
<div style="position:absolute;left:1052.2px;top:738.2px;width:111.7px;height:28.7px;box-sizing:border-box;background:#fdfdfd;border:1.6px solid #0a64c0;border-radius:4.5px"></div>
<div style="position:absolute;left:1179.2px;top:738.2px;width:111.5px;height:28.7px;box-sizing:border-box;background:#fdfdfd;border:1px solid #d0d0d0;border-bottom-color:#bdbdbd;border-radius:4.5px"></div>
<span class="t" style="left:644.70px;top:748px;font:12.6px/1 'Liberation Sans',sans-serif;color:#000;letter-spacing:0.118px;">Ta<u>b</u>ulazioni...</span>
<span class="t" style="left:820.00px;top:748px;font:12.6px/1 'Liberation Sans',sans-serif;color:#000;letter-spacing:0.384px;">Impos<u>t</u>a come predefinito</span>
<span class="t" style="left:1098.90px;top:748px;font:12.6px/1 'Liberation Sans',sans-serif;color:#000;letter-spacing:0.198px;">OK</span>
<span class="t" style="left:1213.80px;top:748px;font:12.6px/1 'Liberation Sans',sans-serif;color:#000;letter-spacing:0.010px;">Annulla</span>
<div style="position:absolute;left:914.2px;top:508.2px;width:265.8px;height:103.6px;box-sizing:border-box;background:#fff;border:1px solid #3c3c3c"></div>
<div style="position:absolute;left:915.2px;top:526.3px;width:263.8px;height:16.7px;box-sizing:border-box;background:#0078d7;outline:1px dotted #e8a060;outline-offset:-1px"></div>
<span class="t" style="left:917.70px;top:512px;font:13.4px/1 'Liberation Sans',sans-serif;color:#000;letter-spacing:-0.186px;">Singola</span>
<span class="t" style="left:918.80px;top:529px;font:13.4px/1 'Liberation Sans',sans-serif;color:#fff;letter-spacing:-0.172px;">1,5 righe</span>
<span class="t" style="left:917.70px;top:546px;font:13.4px/1 'Liberation Sans',sans-serif;color:#000;letter-spacing:0.156px;">Doppia</span>
<span class="t" style="left:917.70px;top:563px;font:13.4px/1 'Liberation Sans',sans-serif;color:#000;letter-spacing:0.036px;">Minima</span>
<span class="t" style="left:917.70px;top:580px;font:13.4px/1 'Liberation Sans',sans-serif;color:#000;letter-spacing:-0.448px;">Esatta</span>
<span class="t" style="left:917.70px;top:597px;font:13.4px/1 'Liberation Sans',sans-serif;color:#000;letter-spacing:0.203px;">Multipla</span>
</body></html>
